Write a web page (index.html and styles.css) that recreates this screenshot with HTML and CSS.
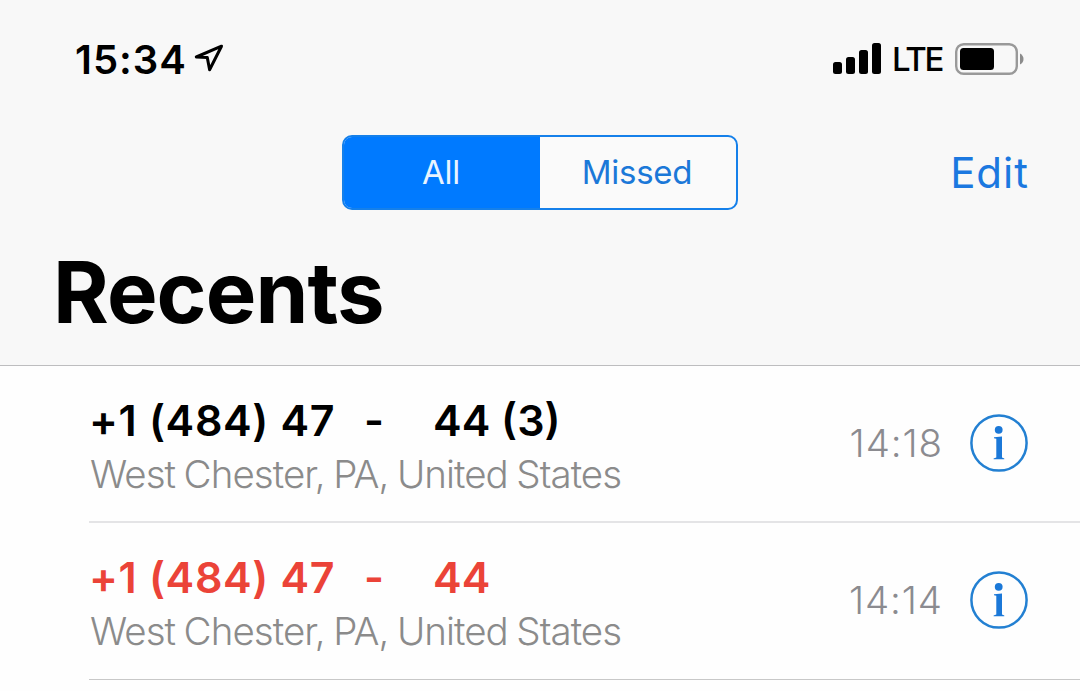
FILE: index.html
```html
<!DOCTYPE html>
<html lang="en">
<head>
<meta charset="utf-8">
<title>Recents</title>
<link rel="stylesheet" href="styles.css">
</head>
<body>
<header class="header">
  <div class="status">
    <div class="status-left">
      <span class="clock">15:34</span>
      <svg class="location" width="32" height="32" viewBox="0 0 32 32"><path d="M27.5 3.2 2.3 14 13.3 14.6 15.6 26.8Z" fill="none" stroke="#000" stroke-width="3" stroke-linejoin="round"/></svg>
    </div>
    <div class="status-right">
      <svg class="signal" width="48" height="31" viewBox="0 0 48 31"><rect x="0" y="19" width="9" height="12" rx="2.5"/><rect x="13" y="14" width="9" height="17" rx="2.5"/><rect x="26" y="7" width="9" height="24" rx="2.5"/><rect x="39" y="0" width="9" height="31" rx="2.5"/></svg>
      <span class="network">LTE</span>
      <svg class="battery" width="70" height="32" viewBox="0 0 70 32"><rect x="1.2" y="1.2" width="60.6" height="29.6" rx="7.5" fill="none" stroke="#999" stroke-width="2.4"/><rect x="5" y="5" width="34" height="22" rx="3.5"/><path d="M65 10.5Q68.5 12.5 68.5 16T65 21.5Z" fill="#8c8c8c"/></svg>
    </div>
  </div>
  <nav class="nav">
    <div class="segmented">
      <span class="segment selected">All</span>
      <span class="segment">Missed</span>
    </div>
    <span class="edit">Edit</span>
  </nav>
  <h1 class="title">Recents</h1>
</header>
<main class="list">
  <section class="call">
    <div class="caller">
      <div class="number"><span class="area">+1 (484) 47</span><span class="dash">-</span><span>44 (3)</span></div>
      <div class="place">West Chester, PA, United States</div>
    </div>
    <span class="time">14:18</span>
    <svg class="info" width="60" height="60" viewBox="0 0 60 60"><circle cx="30" cy="30" r="27.6" fill="none" stroke="#2380d2" stroke-width="2.5"/><circle cx="29.7" cy="16.8" r="3.9" fill="#1b78d8"/><path d="M25 24.2 33 23.4V44.6L35.3 45.5V46.3H24.6V45.5L27.3 44.6V25.8L25 25.2Z" fill="#1b78d8"/></svg>
  </section>
  <section class="call missed-call">
    <div class="caller">
      <div class="number"><span class="area">+1 (484) 47</span><span class="dash">-</span><span>44</span></div>
      <div class="place">West Chester, PA, United States</div>
    </div>
    <span class="time">14:14</span>
    <svg class="info" width="60" height="60" viewBox="0 0 60 60"><circle cx="30" cy="30" r="27.6" fill="none" stroke="#2380d2" stroke-width="2.5"/><circle cx="29.7" cy="16.8" r="3.9" fill="#1b78d8"/><path d="M25 24.2 33 23.4V44.6L35.3 45.5V46.3H24.6V45.5L27.3 44.6V25.8L25 25.2Z" fill="#1b78d8"/></svg>
  </section>
</main>
</body>
</html>
```
FILE: styles.css
```css
* { box-sizing: border-box; }
body { margin: 0; width: 1080px; height: 691px; overflow: hidden; background: #fefefe; color: #000; font-family: Inter, "Liberation Sans", sans-serif; white-space: nowrap; }
svg { display: block; flex: none; }
.header { height: 366px; background: #f8f8f8; border-bottom: 1px solid #bdbdbf; }
.status { height: 119px; display: flex; justify-content: space-between; padding: 0 55px 0 75px; }
.status-left, .status-right { display: flex; align-items: center; height: 117px; }
.status-left { height: 119px; }
.clock { font-size: 40px; font-weight: 600; line-height: 48px; width: 112px; letter-spacing: 1px; }
.location { margin: 0 0 1px 7px; }
.network { font-size: 33px; font-weight: 500; line-height: 40px; width: 50px; margin: 1px 13px 0 11px; letter-spacing: -2.3px; }
.nav { display: grid; grid-template-columns: 1fr 396px 1fr; align-items: center; padding: 16px 52px 0 52px; height: 91px; }
.segmented { grid-column: 2; display: flex; height: 75px; border: 2px solid #1580ea; border-radius: 10px; overflow: hidden; background: #fafafa; }
.segment { flex: 1; display: flex; align-items: center; justify-content: center; padding: 0 2px 2px 0; color: #1b78d8; font-size: 33px; line-height: 40px; letter-spacing: -0.3px; }
.selected { background: #007aff; color: #e8f4ff; }
.edit { justify-self: end; margin: 0 -1px 0 0; font-size: 42px; line-height: 50px; color: #1b78e0; letter-spacing: 1px; }
.title { margin: 31px 0 0 53px; font-size: 85px; line-height: 104px; font-weight: 700; letter-spacing: -0.9px; }
.call { height: 157px; margin-left: 89px; padding: 27px 51px 0 1px; border-bottom: 2px solid #e4e4e6; display: flex; align-items: flex-start; }
.missed-call { border-bottom: 1px solid #c8c8c8; }
.caller { flex: 1; }
.number { display: flex; padding-top: 1px; font-size: 43px; font-weight: 600; line-height: 52px; }
.area { width: 275px; margin-left: -1px; letter-spacing: 0.65px; }
.dash { width: 69px; }
.missed-call .number { color: #eb4338; }
.place { margin-top: 4px; font-size: 38.5px; font-weight: 300; line-height: 48px; color: #8b8b8b; letter-spacing: -0.95px; word-spacing: -1.4px; }
.time { margin: 26px 26px 0 0; font-size: 38.5px; font-weight: 350; line-height: 48px; color: #8b8b90; letter-spacing: 0.9px; }
.info { margin-top: 20px; }
```
